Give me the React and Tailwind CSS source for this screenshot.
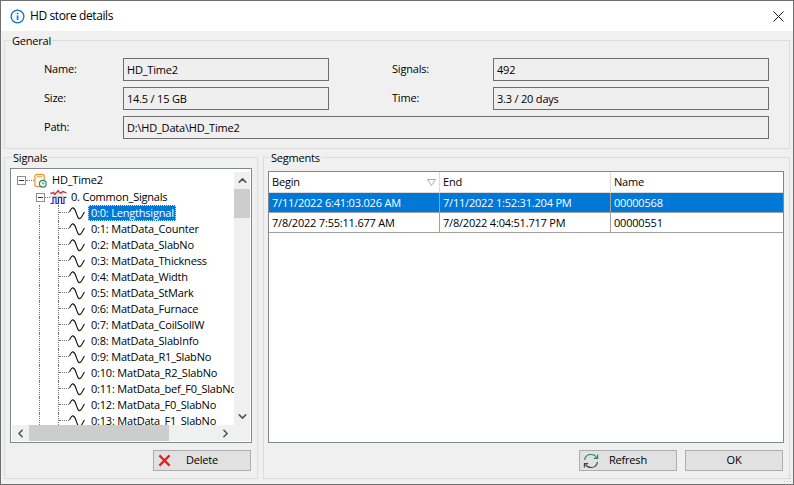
import React from 'react'
import { ChevronUp, ChevronDown, ChevronLeft, ChevronRight } from 'lucide-react'

const signals = [
  '0:0: Lengthsignal',
  '0:1: MatData_Counter',
  '0:2: MatData_SlabNo',
  '0:3: MatData_Thickness',
  '0:4: MatData_Width',
  '0:5: MatData_StMark',
  '0:6: MatData_Furnace',
  '0:7: MatData_CoilSollW',
  '0:8: MatData_SlabInfo',
  '0:9: MatData_R1_SlabNo',
  '0:10: MatData_R2_SlabNo',
  '0:11: MatData_bef_F0_SlabNo',
  '0:12: MatData_F0_SlabNo',
  '0:13: MatData_F1_SlabNo',
]

const segments = [
  ['7/11/2022 6:41:03.026 AM', '7/11/2022 1:52:31.204 PM', '00000568'],
  ['7/8/2022 7:55:11.677 AM', '7/8/2022 4:04:51.717 PM', '00000551'],
]

function Field({ children, className }) {
  return (
    <div className={`h-[23px] border border-[#6d6d6d] bg-[#efefef] pl-[3px] leading-[21px] ${className}`}>
      {children}
    </div>
  )
}

function Expander() {
  return (
    <span className="flex h-[9px] w-[9px] shrink-0 items-center justify-center border border-[#8f8f8f] bg-white">
      <span className="h-px w-[5px] bg-[#333]" />
    </span>
  )
}

function SineIcon() {
  return (
    <svg width="16" height="16" viewBox="0 0 16 16" fill="none" className="shrink-0">
      <path d="M0.5 7C2 3.5 3.5 2 5 3.5C6.5 5 7.5 9 8.5 11.5C9.5 14 11 14.5 12.5 12C13.5 10.5 14.5 8.5 15.5 7" stroke="#111" strokeWidth="1.1" />
    </svg>
  )
}

function StoreIcon() {
  return (
    <svg width="13" height="16" viewBox="0 0 14 16" fill="none" className="shrink-0">
      <rect x="1" y="1" width="10" height="13" rx="2" fill="#fff" stroke="#ef9a2d" strokeWidth="1.4" />
      <path d="M3 3.5H9" stroke="#ef9a2d" strokeWidth="1.2" />
      <circle cx="9.5" cy="11" r="3.6" fill="#fff" stroke="#2e8b57" strokeWidth="1.3" />
      <path d="M9.5 9V11H11.2" stroke="#2e8b57" />
    </svg>
  )
}

function GroupIcon() {
  return (
    <svg width="17" height="16" viewBox="0 0 17 16" fill="none" className="shrink-0">
      <path d="M0 3.5H16M0 7.5H16M4 1V15M8 1V15M12 1V15" stroke="#c4c4c4" strokeWidth="0.8" />
      <path d="M0.5 5L3 3.5L5 5.5L8 1.5L10.5 4.5L13 2.5L16.5 4" stroke="#d9262c" strokeWidth="1.2" />
      <path d="M0.5 14.5H3V8.5H6V14.5H8.5V8.5H11.5V14.5H14V8.5H16.5" stroke="#1a2fd0" strokeWidth="1.2" />
    </svg>
  )
}

function RefreshIcon() {
  return (
    <svg width="16" height="16" viewBox="0 0 16 16" fill="none" className="shrink-0">
      <path d="M1.5 7C2.2 3.6 5 1.5 8 1.5C10.6 1.5 12.6 2.8 13.6 4.6" stroke="#1f8a63" strokeWidth="1.2" />
      <path d="M14.6 1.6V5.4H10.8" stroke="#1f8a63" strokeWidth="1.2" />
      <path d="M14.5 9C13.8 12.4 11 14.5 8 14.5C5.4 14.5 3.4 13.2 2.4 11.4" stroke="#444" strokeWidth="1.2" />
      <path d="M1.4 14.4V10.6H5.2" stroke="#444" strokeWidth="1.2" />
    </svg>
  )
}

function Button({ icon, children, iconGap }) {
  return (
    <button className="flex h-[21px] w-[98px] items-center border border-[#adadad] bg-[#e1e1e1] pl-[3px]">
      {icon}
      <span className={iconGap}>{children}</span>
    </button>
  )
}

export default function App() {
  return (
    <div className="relative flex h-[485px] w-[794px] flex-col overflow-hidden border border-[#707070] bg-[#f0f0f0] font-['Open_Sans',sans-serif] text-[11px] tracking-[-0.2px] text-black">
      <header className="flex h-[30px] shrink-0 items-center bg-white pl-[9px] pr-[9px]">
        <svg width="15" height="15" viewBox="0 0 16 16" fill="none">
          <circle cx="8" cy="8" r="6.8" stroke="#0a74c9" strokeWidth="1.4" />
          <rect x="7.2" y="6.8" width="1.7" height="5" fill="#0a74c9" />
          <rect x="7.2" y="4" width="1.7" height="1.7" fill="#0a74c9" />
        </svg>
        <span className="ml-[5px] text-[12px] tracking-[-0.4px]">HD store details</span>
        <svg width="11" height="11" viewBox="0 0 11 11" fill="none" className="ml-auto">
          <path d="M0.5 0.5L10.5 10.5M10.5 0.5L0.5 10.5" stroke="#111" strokeWidth="1" />
        </svg>
      </header>

      <fieldset className="mx-[3px] mt-[2px] h-[116px] shrink-0 border border-[#dcdcdc]">
        <legend className="ml-[6px] px-[1px] leading-[15px]">General</legend>
        <div className="mt-[10px] grid grid-cols-[79px_206px_63px_101px_276px] items-center gap-y-[6px] pl-[39px]">
          <span>Name:</span>
          <Field>HD_Time2</Field>
          <span className="col-start-4">Signals:</span>
          <Field className="col-start-5">492</Field>
          <span>Size:</span>
          <Field>14.5 / 15 GB</Field>
          <span className="col-start-4">Time:</span>
          <Field className="col-start-5">3.3 / 20 days</Field>
          <span>Path:</span>
          <Field className="col-span-4">D:\HD_Data\HD_Time2</Field>
        </div>
      </fieldset>

      <div className="mt-[1px] flex min-h-0 flex-1 gap-[5px] px-[3px] pb-[5px]">
        <fieldset className="flex h-full w-[254px] flex-col border border-[#dcdcdc] px-[5px]">
          <legend className="ml-[2px] px-[1px] leading-[15px]">Signals</legend>
          <div className="mt-[3px] flex h-[275px] w-[242px] flex-col border border-[#828790] bg-white">
            <div className="flex min-h-0 flex-1">
              <div className="min-w-0 flex-1 overflow-hidden">
                <div className="mt-[3px] flex h-[17px] items-center pl-[6px]">
                  <Expander />
                  <span className="w-[8px] border-t border-dotted border-[#777]" />
                  <StoreIcon />
                  <span className="ml-[5px]">HD_Time2</span>
                </div>
                <div className="flex h-[16px] items-center pl-[25px]">
                  <Expander />
                  <span className="w-[5px] border-t border-dotted border-[#777]" />
                  <GroupIcon />
                  <span className="ml-[4px]">0. Common_Signals</span>
                </div>
                {signals.map((name, i) => (
                  <div key={name} className="flex h-[16px] items-stretch pl-[28px]">
                    <span className="w-[19px] shrink-0 border-l border-dotted border-[#777]" />
                    <span className="w-[11px] shrink-0 self-stretch border-l border-dotted border-[#777]">
                      <span className="mt-[7px] block border-t border-dotted border-[#777]" />
                    </span>
                    <span className="flex items-center"><SineIcon /></span>
                    <span
                      className={
                        i === 0
                          ? 'ml-[3px] w-[88px] whitespace-nowrap border border-dotted border-[#cfe4f7] bg-[#0078d7] px-[2px] leading-[14px] text-white'
                          : 'ml-[6px] whitespace-nowrap leading-[16px]'
                      }
                    >
                      {name}
                    </span>
                  </div>
                ))}
              </div>
              <div className="mr-px mt-[3px] flex w-[16px] shrink-0 flex-col items-center bg-[#f0f0f0]">
                <div className="flex h-[17px] items-center">
                  <ChevronUp size={13} strokeWidth={3} className="text-[#555]" />
                </div>
                <div className="h-[29px] w-full bg-[#cdcdcd]" />
                <div className="flex-1" />
                <ChevronDown size={13} strokeWidth={3} className="my-[2px] text-[#555]" />
              </div>
            </div>
            <div className="mx-px mb-px flex h-[16px] shrink-0 items-center bg-[#f0f0f0]">
              <div className="flex w-[17px] justify-center">
                <ChevronLeft size={13} strokeWidth={3} className="text-[#555]" />
              </div>
              <div className="h-full w-[140px] bg-[#cdcdcd]" />
              <div className="flex-1" />
              <ChevronRight size={13} strokeWidth={3} className="mr-[18px] text-[#555]" />
            </div>
          </div>
          <div className="mt-[7px] flex justify-end pr-[1px]">
            <Button
              iconGap="ml-[15px]"
              icon={
                <svg width="13" height="13" viewBox="0 0 14 14" fill="none" className="ml-px shrink-0">
                  <path d="M1.5 1.5L12.5 12.5M12.5 1.5L1.5 12.5" stroke="#ef1c24" strokeWidth="2.4" />
                </svg>
              }
            >
              Delete
            </Button>
          </div>
        </fieldset>

        <fieldset className="flex h-full flex-1 flex-col border border-[#dcdcdc] px-[4px]">
          <legend className="ml-[2px] px-[1px] leading-[15px]">Segments</legend>
          <div className="mt-[6px] h-[272px] w-[516px] border border-[#828790] bg-white">
            <div className="grid h-[21px] grid-cols-[171px_171px_1fr] items-center border-b border-[#dcdcdc]">
              <div className="flex h-full items-center justify-between border-r border-[#dcdcdc] pl-[3px] pr-[3px]">
                Begin
                <svg width="9" height="7" viewBox="0 0 9 7" fill="none">
                  <path d="M0.5 0.5H8.5L4.5 6.5Z" stroke="#aaa" />
                </svg>
              </div>
              <div className="flex h-full items-center border-r border-[#dcdcdc] pl-[3px]">End</div>
              <div className="pl-[3px]">Name</div>
            </div>
            {segments.map((row, i) => (
              <div
                key={row[2]}
                className={`grid h-[20px] grid-cols-[171px_171px_1fr] border-b border-[#a0a0a0] leading-[19px] ${i === 0 ? 'bg-[#0078d7] text-white' : ''}`}
              >
                <div className="border-r border-[#a0a0a0] pl-[3px]">{row[0]}</div>
                <div className="border-r border-[#a0a0a0] pl-[3px]">{row[1]}</div>
                <div className="pl-[3px]">{row[2]}</div>
              </div>
            ))}
          </div>
          <div className="mt-[7px] flex justify-end gap-[8px] pr-[2px]">
            <Button iconGap="ml-[10px]" icon={<RefreshIcon />}>Refresh</Button>
            <button className="h-[21px] w-[98px] border border-[#adadad] bg-[#e1e1e1]">OK</button>
          </div>
        </fieldset>
      </div>

      <svg width="10" height="10" viewBox="0 0 10 10" className="absolute bottom-px right-px">
        <path d="M8 2h1v1H8zM8 5h1v1H8zM5 5h1v1H5zM8 8h1v1H8zM5 8h1v1H5zM2 8h1v1H2z" fill="#c4c4c4" />
      </svg>
    </div>
  )
}
